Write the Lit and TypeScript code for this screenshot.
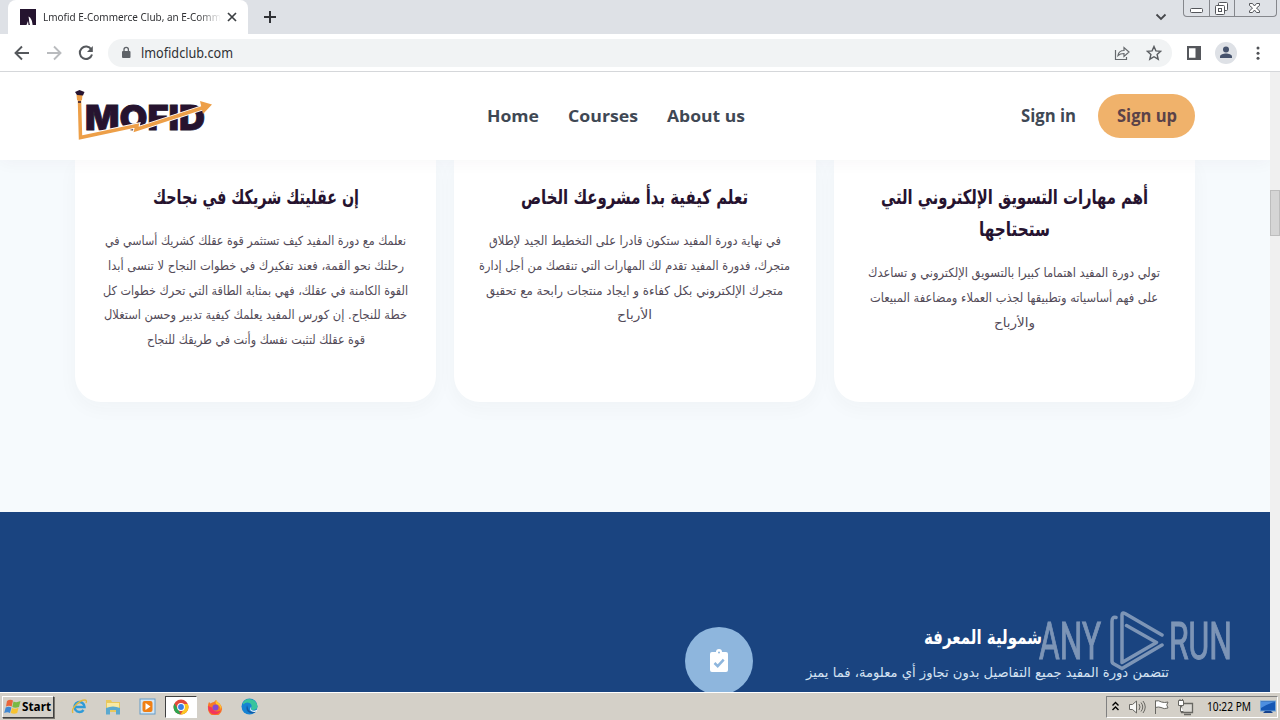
import { LitElement, css, html } from 'lit'
import { customElement, property } from 'lit/decorators.js'

// single line of text, fitted to a width in px
@customElement('fit-text')
export class FitTextElement extends LitElement {
  static override styles = css`
    :host {
      display: block;
    }

    svg {
      display: block;
      overflow: visible;
    }

    text {
      fill: currentColor;
    }
  `

  @property()
  text = ''

  @property({ type: Number })
  width = 100

  @property({ type: Number })
  height = 20

  @property({ type: Number })
  baseline = 15

  @property({ type: Boolean })
  rtl = false

  override render() {
    return html`
      <svg width=${this.width} height=${this.height}>
        <text
          x=${this.width / 2}
          y=${this.baseline}
          text-anchor="middle"
          direction=${this.rtl ? 'rtl' : 'ltr'}
          textLength=${this.width}
          lengthAdjust="spacingAndGlyphs"
        >${this.text}</text>
      </svg>
    `
  }
}

type Line = [text: string, width: number]

interface Card {
  title: Line[]
  body: Line[]
}

const cards: Card[] = [
  {
    title: [['إن عقليتك شريكك في نجاحك', 206]],
    body: [
      ['نعلمك مع دورة المفيد كيف تستثمر قوة عقلك كشريك أساسي في', 301],
      ['رحلتك نحو القمة، فعند تفكيرك في خطوات النجاح لا تنسى أبدا', 296],
      ['القوة الكامنة في عقلك، فهي بمثابة الطاقة التي تحرك خطوات كل', 305],
      ['خطة للنجاح. إن كورس المفيد يعلمك كيفية تدبير وحسن استغلال', 303],
      ['قوة عقلك لتثبت نفسك وأنت في طريقك للنجاح', 218],
    ],
  },
  {
    title: [['تعلم كيفية بدأ مشروعك الخاص', 227]],
    body: [
      ['في نهاية دورة المفيد ستكون قادرا على التخطيط الجيد لإطلاق', 292],
      ['متجرك، فدورة المفيد تقدم لك المهارات التي تنقصك من أجل إدارة', 311],
      ['متجرك الإلكتروني بكل كفاءة و ايجاد منتجات رابحة مع تحقيق', 297],
      ['الأرباح', 35],
    ],
  },
  {
    title: [
      ['أهم مهارات التسويق الإلكتروني التي', 267],
      ['ستحتاجها', 71],
    ],
    body: [
      ['تولي دورة المفيد اهتماما كبيرا بالتسويق الإلكتروني و تساعدك', 292],
      ['على فهم أساسياته وتطبيقها لجذب العملاء ومضاعفة المبيعات', 288],
      ['والأرباح', 41],
    ],
  },
]

@customElement('browser-chrome')
export class BrowserChromeElement extends LitElement {
  static override styles = css`
    :host {
      display: block;
      font-family: 'Noto Sans', sans-serif;
      color: #303134;
    }

    svg {
      display: block;
    }

    .strip {
      height: 34px;
      background: #dee1e6;
      display: flex;
    }

    .tab {
      margin-left: 8px;
      width: 240px;
      height: 34px;
      box-sizing: border-box;
      padding: 0 10px 0 12px;
      border-radius: 8px 8px 0 0;
      background: #fff;
      display: flex;
      align-items: center;
    }

    .title {
      width: 178px;
      margin-left: 7px;
      font-size: 11.5px;
      overflow: hidden;
      mask-image: linear-gradient(to right, #000 155px, transparent 178px);
    }

    .close {
      margin-left: 6px;
    }

    .plus {
      margin: 11px 0 0 16px;
    }

    .chevron {
      margin: 13px 16px 0 auto;
    }

    .window {
      display: flex;
      width: 94px;
      height: 17px;
      box-sizing: border-box;
      margin-right: 3px;
      border: 1px solid #85878c;
      border-top: none;
      border-radius: 0 0 4px 4px;
    }

    .window svg + svg {
      border-left: 1px solid #85878c;
    }

    .toolbar {
      height: 38px;
      box-sizing: border-box;
      border-bottom: 1px solid #d5d7da;
      background: #fff;
      display: flex;
      align-items: center;
      padding: 0 14px;
    }

    .nav {
      display: flex;
      gap: 16px;
      width: 94px;
      flex: none;
    }

    .address {
      width: 1064px;
      height: 28px;
      box-sizing: border-box;
      border-radius: 14px;
      background: #f1f3f4;
      display: flex;
      align-items: center;
      padding: 0 10px 0 12px;
      font-size: 15px;
    }

    .url {
      margin: 0 auto 0 9px;
    }

    .share {
      margin-right: 16px;
    }

    .panel {
      margin-left: 14px;
    }

    .avatar {
      margin-left: 13px;
    }

    .menu {
      margin-left: 18px;
    }
  `

  override render() {
    return html`
      <div class="strip">
        <div class="tab">
          <svg width="16" height="16"><path fill="#25142f" d="M0 0h16v16h-3.500Q12 9 8.500 7.500L10 16H0z" /><path fill="#fff" d="M6.500 16l1.500-4 .5 4zM9 9q3 1.500 3.200 7H10z" /></svg>
          <div class="title">
            <fit-text text="Lmofid E-Commerce Club, an E-Comm" width="178" height="16" baseline="12"></fit-text>
          </div>
          <svg class="close" width="10" height="10" stroke="#3c4043" stroke-width="1.700"><path d="M1 1l8 8M9 1l-8 8" /></svg>
        </div>
        <svg class="plus" width="12" height="12" stroke="#303236" stroke-width="2"><path d="M6 0v12M0 6h12" /></svg>
        <svg class="chevron" width="12" height="8" fill="none" stroke="#45474b" stroke-width="1.800"><path d="M1.500 1.500L6 6l4.500-4.500" /></svg>
        <div class="window">
          <svg width="25" height="16" fill="#fff" stroke="#54565b"><rect x="6.500" y="8.500" width="12" height="4" rx="1" /></svg>
          <svg width="24" height="16" fill="#fff" stroke="#54565b"><rect x="8.500" y="2.500" width="9" height="8" rx="1" /><rect x="5.500" y="5.500" width="9" height="9" rx="1" /><rect x="8.500" y="8.500" width="3" height="3" /></svg>
          <svg width="41" height="16" fill="#fff" stroke="#54565b"><path d="M14.500 3.500h3l2 2.500 2-2.500h3v2L21.500 8l3 3v1.500h-3l-2-2.500-2 2.500h-3V11l3-3-3-2.500z" /></svg>
        </div>
      </div>
      <div class="toolbar">
        <div class="nav">
          <svg width="16" height="16" fill="none" stroke="#55585c" stroke-width="1.900"><path d="M15 8H2M8 1.500L1.500 8 8 14.500" /></svg>
          <svg width="16" height="16" fill="none" stroke="#b9bbbe" stroke-width="1.900"><path d="M1 8h13M8 1.500L14.500 8 8 14.500" /></svg>
          <svg width="16" height="16" fill="none" stroke="#55585c" stroke-width="2"><path d="M13.300 4.500A6.200 6.200 0 1 0 14 9.500" /><path d="M14.800 1v6H9z" fill="#55585c" stroke="none" /></svg>
        </div>
        <div class="address">
          <svg width="12" height="14"><rect x="2" y="5" width="8.500" height="7" rx="1" fill="#5f6368" /><path d="M4 6V3.500a2.200 2.200 0 0 1 4.400 0V6" fill="none" stroke="#5f6368" stroke-width="1.300" /></svg>
          <fit-text class="url" text="lmofidclub.com" width="92" height="20" baseline="15"></fit-text>
          <svg class="share" width="16" height="16" fill="none" stroke="#66696d" stroke-width="1.200"><path d="M1.500 5v9.500h11V12M4 10.500C4.500 7 7 5.500 10 5.500V2.500L15 7l-5 4.500v-3c-3 0-4.500.5-6 2z" /></svg>
          <svg width="16" height="16" fill="none" stroke="#5a5d61" stroke-width="1.400"><path d="M8 1.500l1.900 4.400 4.800.4-3.600 3.200 1.100 4.700L8 11.700l-4.200 2.500 1.100-4.700L1.300 6.300l4.800-.4z" /></svg>
        </div>
        <svg class="panel" width="16" height="16"><path fill="#55575c" fill-rule="evenodd" d="M1 1h14v14H1zM3 3.200v9.600h6.500V3.200z" /></svg>
        <svg class="avatar" width="22" height="22" fill="#45526c"><circle cx="11" cy="11" r="11" fill="#dee1e6" /><circle cx="11" cy="7.500" r="3" /><path d="M5 16v-1.500c0-2 3.500-3 6-3s6 1 6 3V16z" /></svg>
        <svg class="menu" width="6" height="16" fill="#505256"><circle cx="3" cy="3" r="1.500" /><circle cx="3" cy="8.300" r="1.500" /><circle cx="3" cy="13.300" r="1.500" /></svg>
      </div>
    `
  }
}

@customElement('task-bar')
export class TaskBarElement extends LitElement {
  static override styles = css`
    :host {
      display: flex;
      align-items: center;
      height: 28px;
      box-sizing: border-box;
      border-top: 1px solid #fff;
      background: #d4d0c8;
      font-family: 'Noto Sans', sans-serif;
      color: #000;
    }

    svg {
      display: block;
      flex: none;
    }

    .start {
      display: flex;
      align-items: center;
      gap: 1px;
      width: 52px;
      height: 22px;
      box-sizing: border-box;
      margin-left: 2px;
      padding-left: 1px;
      border: 1px solid;
      border-color: #fff #404040 #404040 #fff;
      box-shadow: 1px 1px 0 #77746d;
      font-size: 12px;
      font-weight: 700;
    }

    .apps {
      display: flex;
      align-items: center;
      margin-left: 17px;
    }

    .app {
      display: grid;
      place-items: center;
      width: 34px;
      height: 22px;
    }

    .app.narrow {
      width: 16px;
    }

    .app.wide {
      width: 52px;
    }

    .app.active {
      width: 32px;
      box-sizing: border-box;
      margin: 0 1px 0 10px;
      border: 1px solid;
      border-color: #404040 #fff #fff #404040;
      background: #fff;
    }

    .tray {
      display: flex;
      align-items: center;
      width: 172px;
      height: 22px;
      box-sizing: border-box;
      margin: 0 2px 0 auto;
      border: 1px solid;
      border-color: #808080 #fff #fff #808080;
      font-size: 12px;
    }

    .clock {
      margin: 0 9px 0 2px;
    }
  `

  override render() {
    return html`
      <div class="start">
        <svg width="17" height="16">
          <path fill="#e9653a" d="M3 2q3-2 6-.5L7.700 7.500Q5 6 2 7.500z" />
          <path fill="#79b943" d="M9.500 2.500q3 1.500 7-.5l-1.500 6Q11 9.500 8.300 8z" />
          <path fill="#3f87d2" d="M1.700 8.500q3-1.500 5.700 0L6 14Q3.500 12.500.2 14z" />
          <path fill="#f7c331" d="M8 9q3 1.500 6.500-.2L13.200 14q-3 1.500-6.500 0z" />
        </svg>
        <fit-text text="Start" width="29" height="18" baseline="13"></fit-text>
      </div>
      <div class="apps">
        <div class="app narrow">
          <svg width="17" height="17" fill="none"><path d="M4 9h9.500A5 5 0 1 0 12.500 12" stroke="#2f9bd8" stroke-width="2.500" /><path d="M2 15C-.5 11 8 2 14 2c2 0 1.500 2 1 3" stroke="#e3b83e" stroke-width="1.300" /></svg>
        </div>
        <div class="app wide">
          <svg width="16" height="16"><path fill="#e9c85c" d="M1 1h5l1 2h8v10H1z" /><path fill="#f8e9a4" d="M2 4h12v6H2z" /><path fill="#5ba9cf" d="M1 15.500V9q7-3 14 0v6.500h-4V11H5v4.500z" /></svg>
        </div>
        <div class="app narrow">
          <svg width="17" height="17"><rect x="1" y="1" width="15" height="15" fill="#d5e7f5" stroke="#659bc7" /><rect x="3.500" y="3" width="10" height="11" rx="2" fill="#f08016" /><path fill="#fff" d="M6.500 5l5 3.500-5 3.500z" /></svg>
        </div>
        <div class="app active">
          <svg width="16" height="16"><circle cx="8" cy="8" r="7.500" fill="#e24a3b" /><path fill="#2da650" d="M1.400 4.500L6 12l1.500 3.500A7.500 7.500 0 0 1 1.400 4.500z" /><path fill="#fbc721" d="M8 5h6.900A7.500 7.500 0 0 1 7.500 15.500L11.500 9z" /><circle cx="8" cy="8" r="3.900" fill="#fff" /><circle cx="8" cy="8" r="2.900" fill="#397fe5" /></svg>
        </div>
        <div class="app">
          <svg width="16" height="16"><path fill="#f77a27" d="M2 3l1.500 1.500Q5 3 7 3l2-2q1 2 3.500 3.500 3 3 2.500 6A7 7 0 0 1 1 9Q.5 6 2 3z" /><path fill="#f4365c" d="M1 7q0 8 7 8.500 4-.5 6-4-7 3-9-3z" /><circle cx="8.500" cy="8.500" r="3" fill="#844bd1" /><path fill="#ffc52d" d="M9 1q1 2 4 4 2 3 1 6-1-5-5-6-1-2 0-4z" /></svg>
        </div>
        <div class="app">
          <svg width="17" height="17"><circle cx="8.500" cy="8.500" r="8" fill="#1583d3" /><path fill="#39c49d" d="M2 4.500A8 8 0 0 1 16.500 9q-.5 3-5 3-2-.5-1-2 1-5-4-5.500-2 0-4.500 2z" /><path fill="#155aa4" d="M6 7q-2 6 3 8 3 1 5.500-1-7 .5-7.500-4z" /><path fill="#e8f1f5" d="M10.500 8.500q-1 2 0 3.500 3 1.500 6-.5l-.8 2q-4.200 1.200-6.200-1-1-2 1-4z" /></svg>
        </div>
      </div>
      <div class="tray">
        <svg width="98" height="20" fill="none" stroke="#686762">
          <path stroke="#000" stroke-width="1.400" d="M5.500 8.500l3-3 3 3M5.500 13l3-3 3 3" />
          <path fill="#f7f7f5" d="M22.500 7.500h3l4-3.500v12l-4-3.500h-3z" />
          <path d="M32 7q2 3 0 6M34 5.500q3.500 4.500 0 9M36 4q4.500 6 0 12" />
          <path fill="#fff" d="M48.500 17V3.500M48.500 4q3-1 6 1 3 1 6.500 0-2.500 3 0 6-4 1.500-7-.5-2.500-1-5.500 0" />
          <path fill="#dcdad5" stroke-width="1.300" d="M74.500 6.500h11v9h-11zM77 17.500h7" />
          <path fill="#fff" d="M71.500 3.500h5v5h-5zM73.500 8.500v6h3M73 2v2M75.500 2v2" />
        </svg>
        <fit-text class="clock" text="10:22 PM" width="44" height="18" baseline="13"></fit-text>
        <svg width="16" height="16"><rect x=".5" y="2" width="15" height="10" fill="#1557b4" stroke="#73a5d7" /><path fill="#4d8fe0" d="M1 3h14Q9 4 1 9z" /><path fill="#16438d" d="M5 12h6l2 2H3z" /></svg>
      </div>
    `
  }
}

@customElement('app-root')
export class AppRootElement extends LitElement {
  static override styles = css`
    :host {
      position: relative;
      display: flex;
      flex-direction: column;
      width: 1280px;
      height: 720px;
      overflow: hidden;
      font-family: 'Open Sans', sans-serif;
    }

    .view {
      flex: 1;
      min-height: 0;
      display: flex;
    }

    .page {
      width: 1270px;
      background: #f6fafd;
      overflow: hidden;
    }

    .scroll {
      width: 10px;
      box-sizing: border-box;
      padding-top: 118px;
      background: #f0f0f0;
    }

    .thumb {
      height: 46px;
      box-sizing: border-box;
      border: 1px solid #bdbdbd;
      background: #d5d5d5;
    }

    .header {
      position: relative;
      height: 88px;
      box-sizing: border-box;
      padding: 0 75px;
      background: #fff;
      box-shadow: 0 2px 16px rgba(60, 50, 70, 0.045);
      display: flex;
      align-items: center;
      color: #3f4854;
      font-size: 17px;
      font-weight: 700;
    }

    .logo {
      display: block;
      font-family: Inter, sans-serif;
      font-weight: 900;
    }

    .links {
      display: flex;
      gap: 29px;
      margin-left: 272px;
      font-size: 16px;
    }

    .signin {
      margin-left: auto;
    }

    .signup {
      display: grid;
      place-items: center;
      width: 97px;
      height: 44px;
      margin-left: 22px;
      border-radius: 22px;
      background: #f0b26b;
      color: #5b4248;
    }

    .cards {
      display: grid;
      grid-template-columns: repeat(3, 1fr);
      gap: 18px;
      height: 352px;
      box-sizing: border-box;
      padding: 0 75px 110px;
    }

    .card {
      box-sizing: border-box;
      padding-top: 21px;
      border-radius: 0 0 26px 26px;
      background: #fff;
      box-shadow: 0 6px 20px rgba(50, 45, 60, 0.035);
      display: flex;
      flex-direction: column;
      gap: 15px;
      font-family: 'DejaVu Sans', sans-serif;
    }

    .lines {
      display: grid;
      justify-items: center;
    }

    .title {
      color: #26132f;
      font-size: 20px;
      font-weight: 700;
    }

    .body {
      color: #534b58;
      font-size: 12.5px;
    }

    .features {
      height: 180px;
      box-sizing: border-box;
      padding: 109px 101px 0 0;
      background: #1a4480;
      display: flex;
      justify-content: flex-end;
      align-items: flex-start;
      gap: 53px;
      color: #fff;
      font-family: 'DejaVu Sans', sans-serif;
    }

    .badge {
      display: grid;
      place-items: center;
      width: 68px;
      height: 68px;
      margin-top: 6px;
      border-radius: 50%;
      background: #8eb6dd;
    }

    .feature {
      display: grid;
      width: 363px;
    }

    .feature .name {
      margin-left: 118px;
      font-size: 20px;
      font-weight: 700;
    }

    .feature .text {
      margin-top: 7px;
      font-size: 13.5px;
      color: #d4e2f2;
    }

    /* recorder stamp over the desktop */
    .stamp {
      position: absolute;
      left: 1036px;
      top: 606px;
      opacity: 0.5;
      overflow: visible;
      font-family: Roboto, sans-serif;
    }
  `

  private lines(list: Line[], height: number, baseline: number) {
    return list.map(
      ([text, width]) =>
        html`<fit-text rtl .text=${text} .width=${width} .height=${height} .baseline=${baseline}></fit-text>`,
    )
  }

  override render() {
    return html`
      <browser-chrome></browser-chrome>
      <div class="view">
        <div class="page">
          <div class="header">
            <svg class="logo" width="140" height="54" viewBox="0 0 140 54">
              <text x="10" y="40.500" font-size="34" fill="#26132f" stroke="#26132f" stroke-width=".8" textLength="120" lengthAdjust="spacingAndGlyphs">MOFID</text>
              <path d="M4.500 12L5.500 48.500 62 36.500l-1 4L130 18" fill="none" stroke="#fff" stroke-width="5.500" />
              <path d="M4.500 12L5.500 48.500 62 36.500l-1 4L130 18" fill="none" stroke="#ed9f48" stroke-width="3.500" />
              <path d="M125 12l12 3.500-9 9.500z" fill="#ed9f48" />
              <path d="M1.500 5.500h6L7 11l-2.500 2L2 11z" fill="#ed9f48" />
              <path d="M0 3l4.500-2L9.500 3 8 6.500 2 6z" fill="#26132f" />
              <path d="M3 13h3" stroke="#26132f" stroke-width="1.500" />
            </svg>
            <div class="links">
              <fit-text text="Home" width="52" height="22" baseline="17"></fit-text>
              <fit-text text="Courses" width="70" height="22" baseline="17"></fit-text>
              <fit-text text="About us" width="78" height="22" baseline="17"></fit-text>
            </div>
            <fit-text class="signin" text="Sign in" width="55" height="22" baseline="17"></fit-text>
            <div class="signup">
              <fit-text text="Sign up" width="60" height="22" baseline="17"></fit-text>
            </div>
          </div>
          <div class="cards">
            ${cards.map(
              (card) => html`
                <div class="card">
                  <div class="lines title">${this.lines(card.title, 32, 23)}</div>
                  <div class="lines body">${this.lines(card.body, 24.75, 16.5)}</div>
                </div>
              `,
            )}
          </div>
          <div class="features">
            <div class="badge">
              <svg width="18" height="24" viewBox="0 0 18 24">
                <path fill="#fff" d="M2 3h4a3 3 0 0 1 6 0h4q2 0 2 2v16q0 2-2 2H2q-2 0-2-2V5q0-2 2-2z" />
                <circle cx="9" cy="3.500" r="1" fill="#8eb6dd" />
                <path d="M4.500 14l3.200 3.200 6-6.500" fill="none" stroke="#8eb6dd" stroke-width="2.500" />
              </svg>
            </div>
            <div class="feature">
              <div class="name">${this.lines([['شمولية المعرفة', 118]], 32, 23)}</div>
              <div class="text">${this.lines([['تتضمن دورة المفيد جميع التفاصيل بدون تجاوز أي معلومة، فما يميز', 363]], 25, 17)}</div>
            </div>
          </div>
        </div>
        <div class="scroll"><div class="thumb"></div></div>
      </div>
      <task-bar></task-bar>
      <svg class="stamp" width="200" height="72" fill="#dfe5ec" stroke="#dfe5ec">
        <text x="3" y="53" font-size="51" stroke-width="1" textLength="62" lengthAdjust="spacingAndGlyphs">ANY</text>
        <text x="133" y="53" font-size="51" stroke-width="1" textLength="63" lengthAdjust="spacingAndGlyphs">RUN</text>
        <path
          fill="none"
          stroke-width="3.500"
          stroke-linejoin="round"
          stroke-linecap="round"
          d="M80 11.500q-4-1-4 4V55q0 2 2 3l8 4.500 40-23.500M90.500 19.500L120.500 36.500 86 56.500V9q0-3 3-1.500L126 29"
        />
      </svg>
    `
  }
}

declare global {
  interface HTMLElementTagNameMap {
    'fit-text': FitTextElement
    'browser-chrome': BrowserChromeElement
    'task-bar': TaskBarElement
    'app-root': AppRootElement
  }
}
